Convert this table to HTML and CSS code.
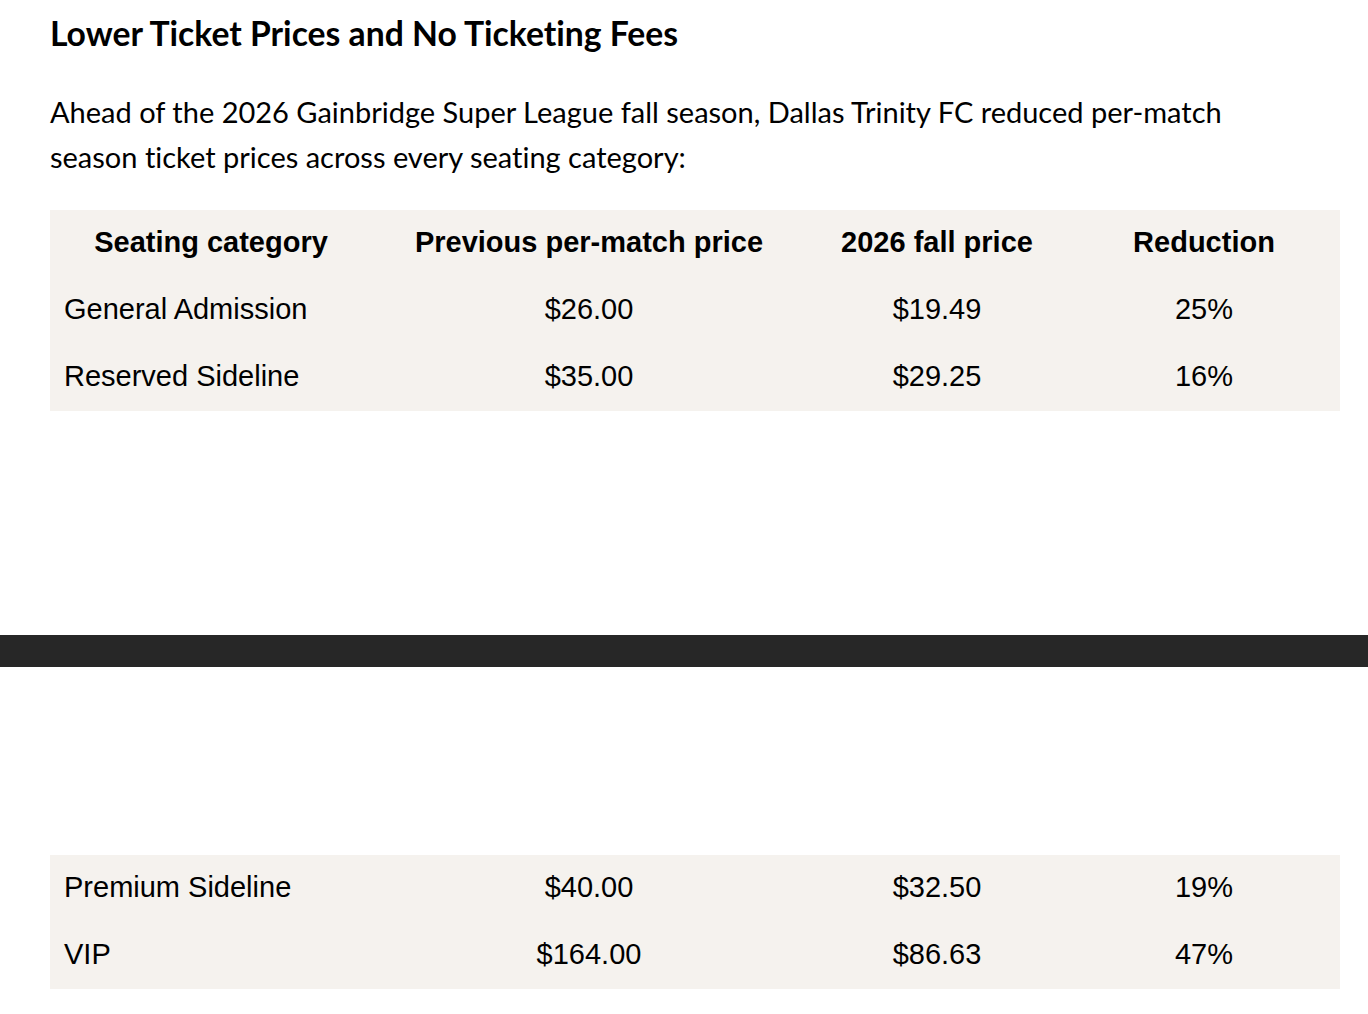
FILE: index.html
```html
<!DOCTYPE html>
<html lang="en">
<head>
<meta charset="utf-8">
<title>Lower Ticket Prices and No Ticketing Fees</title>
<link rel="stylesheet" href="styles.css">
</head>
<body>
<section class="page">
  <h2 class="title">Lower Ticket Prices and No Ticketing Fees</h2>
  <p class="lead">Ahead of the 2026 Gainbridge Super League fall season, Dallas Trinity FC reduced per-match season ticket prices across every seating category:</p>
  <table class="prices first">
    <colgroup>
      <col class="c1"><col class="c2"><col class="c3"><col class="c4">
    </colgroup>
    <thead>
      <tr><th>Seating category</th><th>Previous per-match price</th><th>2026 fall price</th><th>Reduction</th></tr>
    </thead>
    <tbody>
      <tr><td class="name">General Admission</td><td>$26.00</td><td>$19.49</td><td>25%</td></tr>
      <tr><td class="name">Reserved Sideline</td><td>$35.00</td><td>$29.25</td><td>16%</td></tr>
    </tbody>
  </table>
</section>
<div class="break"></div>
<section class="page cont">
  <table class="prices">
    <colgroup>
      <col class="c1"><col class="c2"><col class="c3"><col class="c4">
    </colgroup>
    <tbody>
      <tr><td class="name">Premium Sideline</td><td>$40.00</td><td>$32.50</td><td>19%</td></tr>
      <tr><td class="name">VIP</td><td>$164.00</td><td>$86.63</td><td>47%</td></tr>
    </tbody>
  </table>
</section>
</body>
</html>
```
FILE: styles.css
```css
html, body {
  margin: 0;
  padding: 0;
  background: #ffffff;
  color: #000000;
}
.page {
  padding: 0 28px 0 50px;
}
.title, .lead {
  font-family: "Lato", "Open Sans", sans-serif;
  font-variant-ligatures: none;
  font-feature-settings: "liga" 0;
}
.title {
  font-weight: 700;
  font-size: 33.7px;
  line-height: 36px;
  margin: 0;
  padding-top: 15px;
}
.lead {
  font-size: 29px;
  line-height: 45px;
  margin: 38px 0 0 0;
  max-width: 1200px;
}
.prices {
  width: 1290px;
  border-collapse: collapse;
  background: #f5f2ee;
  font-family: "Liberation Sans", Arial, sans-serif;
  font-size: 29px;
  table-layout: fixed;
}
.prices .c1 { width: 322px; }
.prices .c2 { width: 434px; }
.prices .c3 { width: 262px; }
.prices .c4 { width: 272px; }
.prices th, .prices td {
  height: 67px;
  padding: 0 14px 3px 14px;
  text-align: center;
  vertical-align: middle;
  box-sizing: border-box;
}
.prices th { font-weight: 700; }
.prices td.name { text-align: left; }
.prices.first { margin-top: 31px; }
.break {
  height: 32px;
  background: #272727;
  margin-top: 224px;
  margin-bottom: 188px;
}
```
